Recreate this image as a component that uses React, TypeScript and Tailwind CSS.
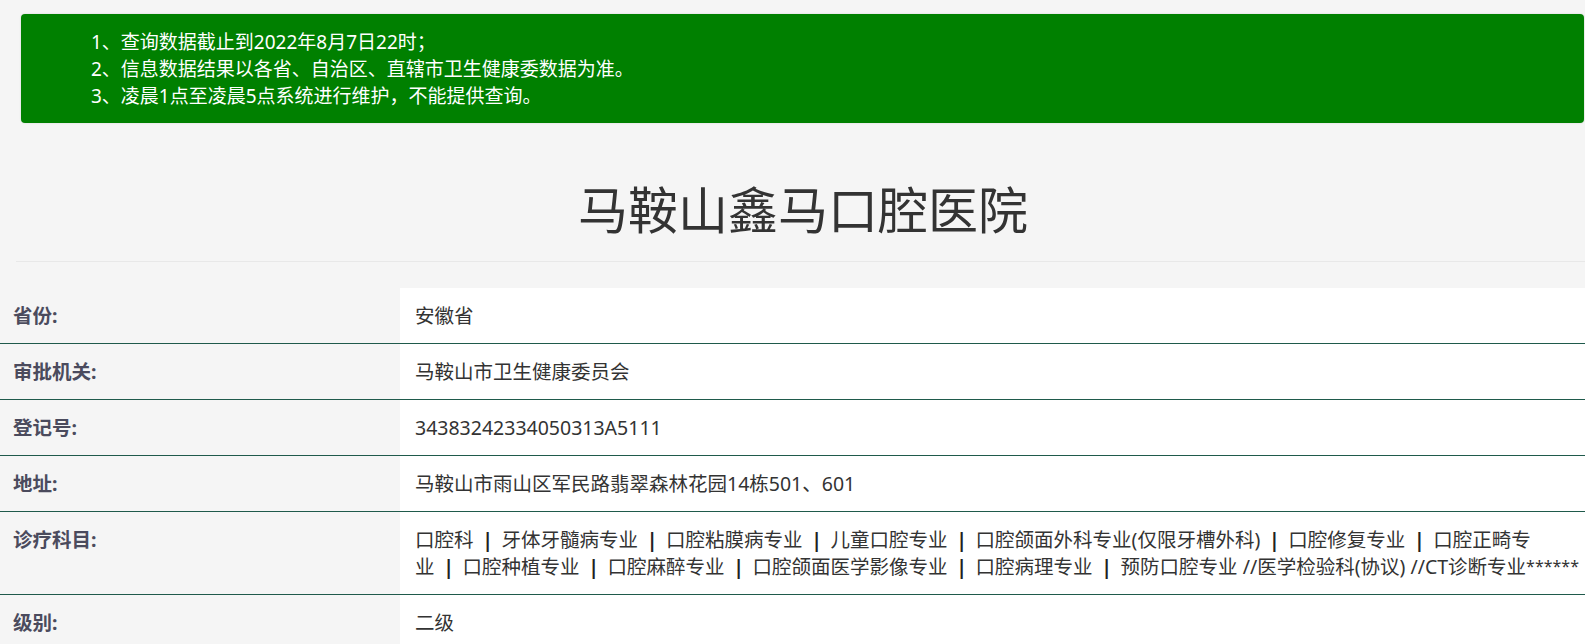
import React from 'react';

const notices = [
  '1、查询数据截止到2022年8月7日22时；',
  '2、信息数据结果以各省、自治区、直辖市卫生健康委数据为准。',
  '3、凌晨1点至凌晨5点系统进行维护，不能提供查询。',
];

const Sep = () => <span className="inline-block w-[28px] text-center font-bold text-[#222]">|</span>;

const subjectsLine1 = ['口腔科', '牙体牙髓病专业', '口腔粘膜病专业', '儿童口腔专业', '口腔颌面外科专业(仅限牙槽外科)', '口腔修复专业', '口腔正畸专'];
const subjectsLine2 = ['业', '口腔种植专业', '口腔麻醉专业', '口腔颌面医学影像专业', '口腔病理专业', '预防口腔专业 //医学检验科(协议) //CT诊断专业'];

// joins items with the bar separator used on the source page
const joined = (items: string[]) =>
  items.map((t, i) => (
    <React.Fragment key={i}>
      {i > 0 && <Sep />}
      {t}
    </React.Fragment>
  ));

const rows: { label: string; value: React.ReactNode }[] = [
  { label: '省份:', value: '安徽省' },
  { label: '审批机关:', value: '马鞍山市卫生健康委员会' },
  { label: '登记号:', value: '34383242334050313A5111' },
  { label: '地址:', value: '马鞍山市雨山区军民路翡翠森林花园14栋501、601' },
  {
    label: '诊疗科目:',
    value: (
      <>
        {joined(subjectsLine1)}
        <br />
        {joined(subjectsLine2)}
        <span className="align-[2px] text-[16px]">******</span>
      </>
    ),
  },
  { label: '级别:', value: '二级' },
];

export default function App() {
  return (
    <div className="min-h-screen overflow-hidden bg-[#f5f5f5] pt-[14px] font-['Noto_Sans','Noto_Sans_CJK_SC',sans-serif] text-[#333]">
      {/* notice banner */}
      <div className="ml-[21px] mr-px rounded bg-[#008000] pt-[15px] pb-[13px] pl-[70px] text-[19px] leading-[27px] text-white shadow-[0_0_2px_rgba(0,0,0,0.15)]">
        {notices.map((n) => (
          <p key={n}>{n}</p>
        ))}
      </div>

      <h1 className="ml-[21px] mt-[62px] text-center text-[50px] leading-[50px] text-[#333]">马鞍山鑫马口腔医院</h1>

      <div className="ml-4 mt-[26px] h-px bg-[#e8e8e8]" />

      {/* detail table */}
      <div className="mt-[26px]">
        {rows.map(({ label, value }) => (
          <div key={label} className="flex border-b border-[#1f5a4b] text-[19.5px] leading-[27px]">
            <div className="w-[400px] shrink-0 py-[14px] pl-[13px] font-bold text-[#4b4b5d]">{label}</div>
            <div className="flex-1 whitespace-nowrap bg-white py-[14px] pl-[15px] text-[#333]">{value}</div>
          </div>
        ))}
      </div>
    </div>
  );
}
